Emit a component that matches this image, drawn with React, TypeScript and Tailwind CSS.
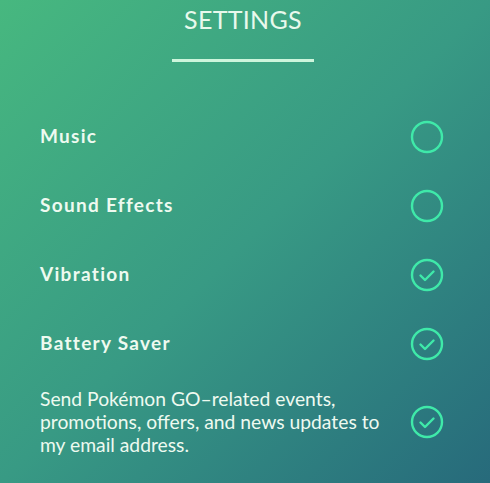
const rows = [
  { label: 'Music', on: false },
  { label: 'Sound Effects', on: false },
  { label: 'Vibration', on: true },
  { label: 'Battery Saver', on: true },
]

function Toggle({ on }: { on: boolean }) {
  return (
    <svg width="34" height="34" viewBox="0 0 34 34" fill="none" className="shrink-0">
      <circle cx="17" cy="17" r="15" stroke="#3fe9a9" strokeWidth="2.4" />
      {on && (
        <path d="M10.5 17.5 L15 22 L23.5 13.5" stroke="#3fe9a9" strokeWidth="2.4" strokeLinecap="round" strokeLinejoin="round" />
      )}
    </svg>
  )
}

export default function App() {
  return (
    <div
      className="w-[490px] h-[483px] overflow-hidden bg-gradient-to-br from-[#47b87f] via-[#389a84] to-[#276a7b] text-[#eefaf0]"
      style={{ fontFamily: 'Lato, "Open Sans", sans-serif' }}
    >
      <div className="flex flex-col items-center pt-[4px] pr-[4px]">
        <h1 className="text-[25px] leading-[30px] tracking-[0.3px] text-[#e8f9ec]">SETTINGS</h1>
        <div className="mt-[25px] h-[3px] w-[142px] bg-[#cdf5dc]" />
      </div>

      <div className="mt-[40px] pl-[40px] pr-[46px]">
        {rows.map((r) => (
          <div key={r.label} className="flex items-center justify-between h-[69px]">
            <span className="text-[19px] font-bold tracking-[1.3px]">{r.label}</span>
            <Toggle on={r.on} />
          </div>
        ))}
        <div className="flex items-center justify-between mt-[9px]">
          <p className="w-[350px] text-[19.3px] leading-[23px]">
            Send Pokémon GO–related events, promotions, offers, and news updates to my email address.
          </p>
          <Toggle on />
        </div>
      </div>
    </div>
  )
}
